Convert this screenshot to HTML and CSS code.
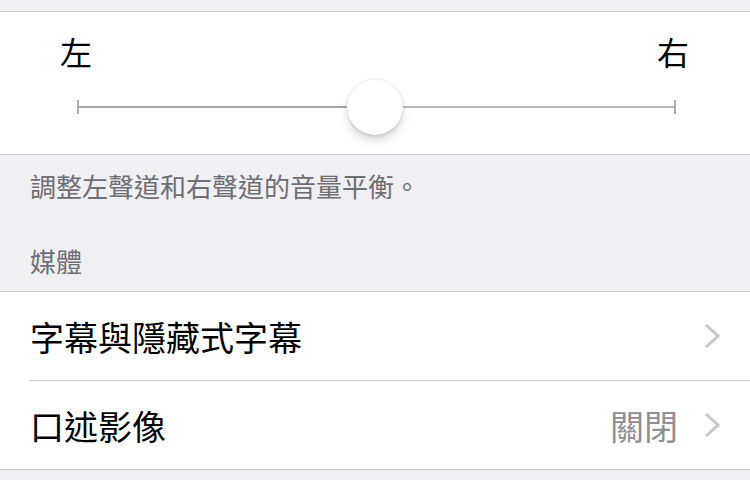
FILE: index.html
```html
<!DOCTYPE html>
<html lang="zh-Hant">
<head>
    <meta charset="UTF-8">
    <meta name="viewport" content="width=device-width, initial-scale=1.0">
    <title>音訊/視覺</title>
    <link rel="stylesheet" href="styles.css">
</head>
<body>
    <div class="espaco-topo"></div>

    <section class="grupo balanco">
        <div class="rotulos">
            <span>左</span>
            <span>右</span>
        </div>
        <div class="slider">
            <div class="trilho">
                <span class="marca"></span>
                <span class="linha esquerda"></span>
                <span class="linha direita"></span>
                <span class="marca"></span>
            </div>
            <div class="botao"></div>
        </div>
    </section>

    <p class="rodape">調整左聲道和右聲道的音量平衡。</p>

    <h2 class="cabecalho">媒體</h2>

    <section class="grupo lista">
        <div class="linha-item">
            <span class="titulo">字幕與隱藏式字幕</span>
            <svg class="seta" width="16" height="26" viewBox="0 0 16 26"><polyline points="2,2 14,13 2,24" fill="none" stroke="#c7c7cc" stroke-width="3"/></svg>
        </div>
        <div class="linha-item">
            <span class="titulo">口述影像</span>
            <span class="valor">關閉</span>
            <svg class="seta" width="16" height="26" viewBox="0 0 16 26"><polyline points="2,2 14,13 2,24" fill="none" stroke="#c7c7cc" stroke-width="3"/></svg>
        </div>
    </section>
</body>
</html>
```

FILE: styles.css
```css
body {
    margin: 0;
    background-color: #efeff4;
    font-family: "Noto Sans CJK TC", "Noto Sans", sans-serif;
    color: #000;
    width: 750px;
    height: 480px;
    overflow: hidden;
}

.espaco-topo { height: 11px; }

.grupo {
    background-color: #fff;
    border-top: 1px solid #c8c7cc;
    border-bottom: 1px solid #c8c7cc;
}

/* --- balanço esquerda/direita --- */
.balanco { height: 142px; }

.rotulos {
    display: flex;
    justify-content: space-between;
    padding: 21px 61px 0 60px;
    font-size: 32px;
    line-height: 36px;
}

.slider {
    position: relative;
    margin: 10px 74px 0 77px;
    height: 56px;
}

.trilho {
    display: flex;
    align-items: center;
    height: 56px;
}

.marca {
    width: 2px;
    height: 14px;
    background-color: #adadad;
}

.linha { height: 2px; flex: 1; }
.linha.esquerda { background-color: #a4a4a4; }
.linha.direita { background-color: #b8b8b8; }

.botao {
    position: absolute;
    left: 270px;
    top: 0;
    width: 56px;
    height: 56px;
    border-radius: 50%;
    background-color: #fff;
    box-shadow: 0 0 1px rgba(0, 0, 0, 0.25), 0 6px 10px rgba(0, 0, 0, 0.14), 0 3px 1px rgba(0, 0, 0, 0.05);
}

/* --- textos cinza --- */
.rodape, .cabecalho {
    margin: 0;
    padding: 0 30px;
    font-size: 26px;
    font-weight: normal;
    color: #6d6d72;
    line-height: 34px;
}

.rodape { padding-top: 14px; }
.cabecalho { padding-top: 41px; padding-bottom: 13px; }

/* --- lista --- */
.lista { padding-left: 30px; }

.linha-item {
    display: flex;
    align-items: center;
    height: 88px;
    padding-right: 30px;
    font-size: 34px;
}

.linha-item + .linha-item { border-top: 1px solid #c8c7cc; }

.titulo { flex: 1; }

.valor {
    color: #8e8e93;
    margin-right: 26px;
}

.seta { display: block; }
```
